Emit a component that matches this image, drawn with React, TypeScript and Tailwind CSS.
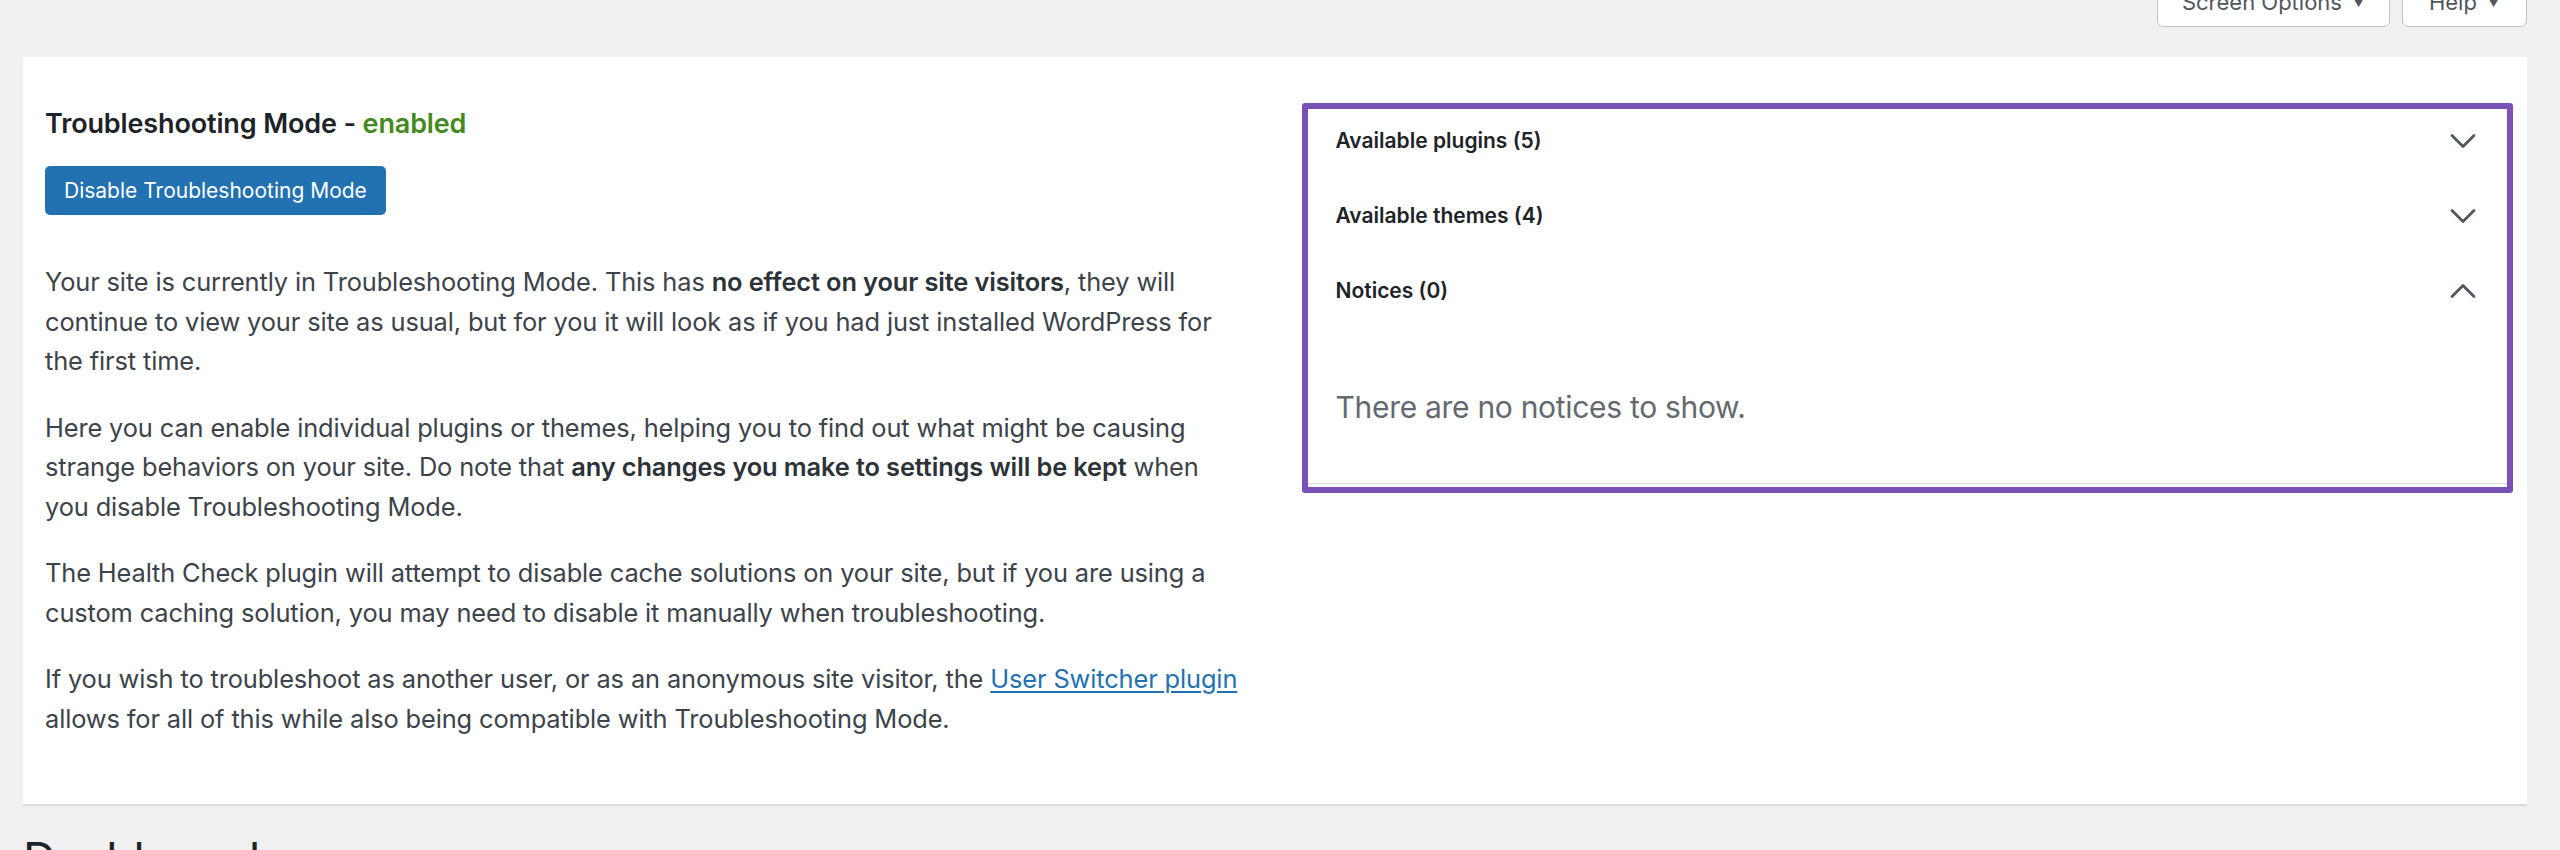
import { ChevronDown, ChevronUp } from 'lucide-react';

const sections = [
  { label: 'Available plugins (5)', open: false },
  { label: 'Available themes (4)', open: false },
  { label: 'Notices (0)', open: true },
];

export default function App() {
  return (
    <div className="h-[850px] overflow-hidden bg-[#f0f0f1] font-['Inter','Liberation_Sans',sans-serif] text-[#3c434a]">
      {/* Screen meta links */}
      <div className="-mt-[22px] flex justify-end gap-[12px] pr-[33px]">
        <button className="flex h-[49px] w-[233px] items-center justify-center gap-[10px] rounded-b-[6px] border border-[#c3c4c7] bg-white text-[22px] text-[#50575e]">
          Screen Options <span className="text-[13px]">▼</span>
        </button>
        <button className="flex h-[49px] w-[125px] items-center justify-center gap-[10px] rounded-b-[6px] border border-[#c3c4c7] bg-white text-[22px] text-[#50575e]">
          Help <span className="text-[13px]">▼</span>
        </button>
      </div>

      {/* Troubleshooting panel */}
      <div className="mt-[30px] ml-[23px] mr-[33px] grid grid-cols-2 gap-[45px] border-b-2 border-[#dcdcde] bg-white pt-[46px] pr-[14px] pb-[66px] pl-[22px]">
        <div>
          <h2 className="text-[27px] leading-[42px] font-semibold tracking-[-0.005em] text-[#1d2327]">
            Troubleshooting Mode - <span className="text-[#428a1e]">enabled</span>
          </h2>
          <button className="mt-[21px] h-[49px] rounded-[5px] bg-[#2271b1] px-[19px] text-[21px] text-white">
            Disable Troubleshooting Mode
          </button>

          <div className="mt-[47px] flex flex-col gap-[27px] text-[25.4px] leading-[39.5px] tracking-[-0.005em]">
            <p>
              Your site is currently in Troubleshooting Mode. This has <strong className="font-semibold text-[#2c3338]">no effect on your site visitors</strong>, they will
              <br />
              continue to view your site as usual, but for you it will look as if you had just installed WordPress for
              <br />
              the first time.
            </p>
            <p>
              Here you can enable individual plugins or themes, helping you to find out what might be causing
              <br />
              strange behaviors on your site. Do note that <strong className="font-semibold text-[#2c3338]">any changes you make to settings will be kept</strong> when
              <br />
              you disable Troubleshooting Mode.
            </p>
            <p>
              The Health Check plugin will attempt to disable cache solutions on your site, but if you are using a
              <br />
              custom caching solution, you may need to disable it manually when troubleshooting.
            </p>
            <p>
              If you wish to troubleshoot as another user, or as an anonymous site visitor, the{' '}
              <a href="#" className="text-[#2271b1] underline underline-offset-[3px]">User Switcher plugin</a>
              <br />
              allows for all of this while also being compatible with Troubleshooting Mode.
            </p>
          </div>
        </div>

        <div className="self-start">
          <div className="rounded-[3px] border-[6px] border-[#7b51b8] pb-[3px]">
            <div className="border-b border-[#dcdcde]">
              {sections.map((s) => (
                <div key={s.label} className="flex h-[75px] items-start justify-between pt-[10px] pr-[22px] pl-[28px]">
                  <span className="mt-[4px] text-[21px] leading-[36px] font-semibold text-[#1d2327]">{s.label}</span>
                  {s.open ? (
                    <ChevronUp size={44} strokeWidth={1.5} className="text-[#50575e]" />
                  ) : (
                    <ChevronDown size={44} strokeWidth={1.5} className="text-[#50575e]" />
                  )}
                </div>
              ))}
              <p className="pt-[48px] pb-[51px] pl-[28px] text-[30px] leading-[50px] tracking-[-0.01em] text-[#646970]">
                There are no notices to show.
              </p>
            </div>
          </div>
        </div>
      </div>

      <h1 className="mt-[23px] ml-[23px] text-[46px] leading-[60px] text-[#1d2327]">Dashboard</h1>
    </div>
  );
}
